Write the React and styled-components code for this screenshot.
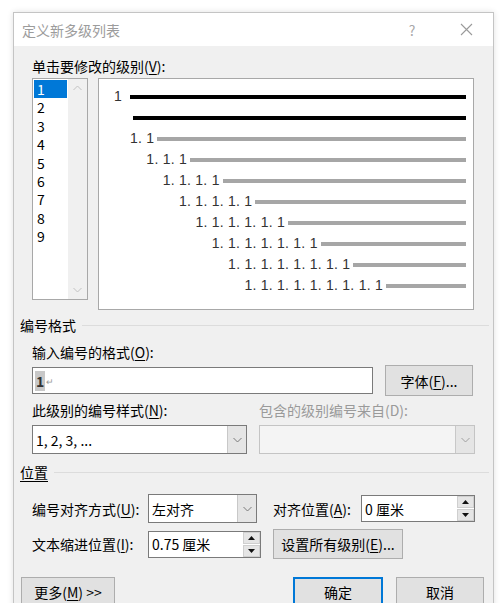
import styled, { createGlobalStyle } from 'styled-components';

const GlobalStyle = createGlobalStyle`
  body {
    margin: 0;
    background: #fff;
    font-family: "Noto Sans CJK SC", "Noto Sans", sans-serif;
    font-size: 14px;
    color: #000;
  }
`;

const Page = styled.div`
  width: 500px;
  height: 603px;
  overflow: hidden;
  padding: 12px 0 0 13px;
  box-sizing: border-box;
`;

const Dialog = styled.div`
  width: 481px;
  height: 640px;
  box-sizing: border-box;
  border: 1px solid #c4c4c4;
  background: #f0f0f0;
  box-shadow: 0 0 6px rgba(0, 0, 0, 0.12);
  display: flex;
  flex-direction: column;
`;

const TitleBar = styled.div`
  height: 33px;
  background: #fff;
  display: flex;
  align-items: center;
  padding-left: 8px;
  padding-right: 4px;

  .title {
    color: #9c9c9c;
    font-size: 14px;
    line-height: 20px;
  }
`;

const TitleButton = styled.div`
  width: 46px;
  height: 33px;
  display: flex;
  align-items: center;
  justify-content: center;
  color: #a8a8a8;
  font-size: 14px;
  margin-left: ${(p) => (p.$push ? 'auto' : '8px')};
`;

const Body = styled.div`
  padding-top: 10px;
  display: flex;
  flex-direction: column;
`;

const Section = styled.div`
  padding-left: 18px;
  margin-top: ${(p) => p.$top || 0}px;
`;

const Label = styled.div`
  line-height: 20px;
  height: 20px;
  white-space: nowrap;
  color: ${(p) => (p.$disabled ? '#9a9a9a' : '#000')};
`;

const Acc = styled.span`
  text-decoration: underline;
  text-underline-offset: 2px;
`;

const LevelRow = styled.div`
  display: flex;
  gap: 10px;
  margin-top: 2px;
`;

const ListBox = styled.div`
  width: 56px;
  height: 222px;
  box-sizing: border-box;
  border: 1px solid #a8a8a8;
  background: #fff;
  display: flex;
`;

const ListItems = styled.div`
  flex: 1;
  padding: 1px;
`;

const ListItem = styled.div`
  height: 18.4px;
  line-height: 18.4px;
  padding-left: 3px;
  font-size: 14px;
  background: ${(p) => (p.$selected ? '#0078d7' : 'transparent')};
  color: ${(p) => (p.$selected ? '#fff' : '#000')};
`;

const ScrollTrack = styled.div`
  width: 19px;
  background: #f0f0f0;
  display: flex;
  flex-direction: column;
  justify-content: space-between;
  align-items: center;
  padding: 6px 0;
`;

const Preview = styled.div`
  width: 376px;
  height: 232px;
  box-sizing: border-box;
  border: 1px solid #a8a8a8;
  background: #fff;
  padding-top: 6px;
  font-family: "Liberation Sans", Arial, sans-serif;
  font-size: 14px;
  letter-spacing: 0.25px;
  color: #333;
`;

const PreviewRow = styled.div`
  height: 21px;
  display: flex;
  align-items: center;
  padding-left: ${(p) => p.$indent}px;
  padding-right: 7px;
  white-space: nowrap;
`;

const Bar = styled.div`
  flex: 1;
  height: 4px;
  margin-left: ${(p) => p.$gap || 3}px;
  margin-top: 2px;
  background: ${(p) => (p.$dark ? '#000' : '#a6a6a6')};
`;

const GroupHeader = styled.div`
  display: flex;
  align-items: center;
  gap: 6px;
  padding-left: 6px;
  padding-right: 4px;
  margin-top: ${(p) => p.$top}px;
  line-height: 18px;
  height: 18px;

  span {
    text-decoration: ${(p) => (p.$underline ? 'underline' : 'none')};
    text-underline-offset: 3px;
  }

  &::after {
    content: '';
    flex: 1;
    height: 1px;
    background: #dcdcdc;
  }
`;

const Row = styled.div`
  display: flex;
  align-items: center;
  margin-top: ${(p) => p.$top || 0}px;
`;

const TextBox = styled.div`
  width: ${(p) => p.$w}px;
  height: ${(p) => p.$h || 27}px;
  box-sizing: border-box;
  border: 1px solid #7a7a7a;
  background: #fff;
  display: flex;
  align-items: center;
  padding-left: 2px;
  font-size: 14px;

  .sel {
    background: #c8c8c8;
    padding: 0 1px;
    font-weight: 600;
    color: #333;
  }

  .mark {
    font-size: 9px;
    color: #999;
    margin-left: 1px;
    margin-top: 2px;
  }
`;

const Button = styled.div`
  width: ${(p) => p.$w}px;
  height: ${(p) => p.$h || 30}px;
  box-sizing: border-box;
  margin-left: ${(p) => p.$left || 0}px;
  border: ${(p) => (p.$primary ? '2px solid #0078d7' : '1px solid #adadad')};
  background: #e1e1e1;
  display: flex;
  align-items: center;
  justify-content: center;
  white-space: nowrap;
`;

const Columns = styled.div`
  display: flex;
  gap: 12px;
  margin-top: 4px;
`;

const Column = styled.div`
  display: flex;
  flex-direction: column;
  gap: 5px;
`;

const Select = styled.div`
  width: ${(p) => p.$w}px;
  height: 29px;
  box-sizing: border-box;
  border: 1px solid ${(p) => (p.$disabled ? '#c4c4c4' : '#7a7a7a')};
  background: ${(p) => (p.$disabled ? '#f4f4f4' : '#fff')};
  display: flex;
  align-items: stretch;

  .value {
    flex: 1;
    display: flex;
    align-items: center;
    padding-left: 3px;
  }
`;

const DropButton = styled.div`
  width: 18px;
  background: #e5e5e5;
  border-left: 1px solid #c8c8c8;
  display: flex;
  align-items: center;
  justify-content: center;
`;

const SpinBox = styled.div`
  width: ${(p) => p.$w}px;
  height: 27px;
  box-sizing: border-box;
  border: 1px solid #7a7a7a;
  background: #fff;
  display: flex;

  .value {
    flex: 1;
    display: flex;
    align-items: center;
    padding-left: 3px;
  }
`;

const SpinButtons = styled.div`
  width: 17px;
  display: flex;
  flex-direction: column;
  gap: 1px;
  background: #fff;
`;

const SpinHalf = styled.div`
  flex: 1;
  background: #e5e5e5;
  border: 1px solid #cfcfcf;
  display: flex;
  align-items: center;
  justify-content: center;
`;

const PosGrid = styled.div`
  display: grid;
  grid-template-columns: 116px 125px 88px 114px;
  grid-auto-rows: auto;
  row-gap: 6px;
  align-items: center;
  margin-top: 13px;
`;

const Footer = styled.div`
  display: flex;
  align-items: center;
  padding-left: 7px;
  padding-right: 9px;
  margin-top: 18px;

  .spacer {
    flex: 1;
  }
`;

const Chevron = ({ up, color = '#8a8a8a' }) => (
  <svg width="9" height="6" viewBox="0 0 9 6">
    <path
      d={up ? 'M0.5 5 L4.5 1 L8.5 5' : 'M0.5 1 L4.5 5 L8.5 1'}
      fill="none"
      stroke={color}
      strokeWidth="1"
    />
  </svg>
);

const Triangle = ({ up }) => (
  <svg width="7" height="4" viewBox="0 0 7 4">
    <path d={up ? 'M0 4 L3.5 0 L7 4 Z' : 'M0 0 L3.5 4 L7 0 Z'} fill="#111" />
  </svg>
);

const Spin = ({ w, value }) => (
  <SpinBox $w={w}>
    <div className="value">{value}</div>
    <SpinButtons>
      <SpinHalf>
        <Triangle up />
      </SpinHalf>
      <SpinHalf>
        <Triangle />
      </SpinHalf>
    </SpinButtons>
  </SpinBox>
);

const Dropdown = ({ w, value, disabled }) => (
  <Select $w={w} $disabled={disabled}>
    <div className="value">{value}</div>
    <DropButton>
      <Chevron color={disabled ? '#a0a0a0' : '#7a7a7a'} />
    </DropButton>
  </Select>
);

const levels = [2, 3, 4, 5, 6, 7, 8, 9];

const App = () => {
  return (
    <Page>
      <GlobalStyle />
      <Dialog>
        <TitleBar>
          <span className="title">定义新多级列表</span>
          <TitleButton $push>?</TitleButton>
          <TitleButton>
            <svg width="13" height="13" viewBox="0 0 13 13">
              <path d="M1 1 L12 12 M12 1 L1 12" stroke="#9a9a9a" strokeWidth="1.1" />
            </svg>
          </TitleButton>
        </TitleBar>

        <Body>
          <Section>
            <Label>
              单击要修改的级别(<Acc>V</Acc>):
            </Label>
            <LevelRow>
              <ListBox>
                <ListItems>
                  {[1, 2, 3, 4, 5, 6, 7, 8, 9].map((n) => (
                    <ListItem key={n} $selected={n === 1}>
                      {n}
                    </ListItem>
                  ))}
                </ListItems>
                <ScrollTrack>
                  <Chevron up color="#c2c2c2" />
                  <Chevron color="#c2c2c2" />
                </ScrollTrack>
              </ListBox>
              <Preview>
                <PreviewRow $indent={15}>
                  1
                  <Bar $dark $gap={8} />
                </PreviewRow>
                <PreviewRow $indent={31}>
                  <Bar $dark $gap={0} />
                </PreviewRow>
                {levels.map((lv, i) => (
                  <PreviewRow key={lv} $indent={31 + i * 16.35}>
                    {Array(lv).fill('1').join('. ')}
                    <Bar />
                  </PreviewRow>
                ))}
              </Preview>
            </LevelRow>
          </Section>

          <GroupHeader $top={6}>
            <span>编号格式</span>
          </GroupHeader>

          <Section $top={8}>
            <Label>
              输入编号的格式(<Acc>O</Acc>):
            </Label>
            <Row $top={3}>
              <TextBox $w={341}>
                <span className="sel">1</span>
                <span className="mark">↵</span>
              </TextBox>
              <Button $w={88} $h={31} $left={12}>
                字体(<Acc>F</Acc>)...
              </Button>
            </Row>
            <Columns>
              <Column>
                <Label>
                  此级别的编号样式(<Acc>N</Acc>):
                </Label>
                <Dropdown w={215} value="1, 2, 3, ..." />
              </Column>
              <Column>
                <Label $disabled>包含的级别编号来自(D):</Label>
                <Dropdown w={216} disabled />
              </Column>
            </Columns>
          </Section>

          <GroupHeader $top={9} $underline>
            <span>位置</span>
          </GroupHeader>

          <Section>
            <PosGrid>
              <Label>
                编号对齐方式(<Acc>U</Acc>):
              </Label>
              <Dropdown w={109} value="左对齐" />
              <Label>
                对齐位置(<Acc>A</Acc>):
              </Label>
              <Spin w={114} value="0 厘米" />

              <Label>
                文本缩进位置(<Acc>I</Acc>):
              </Label>
              <Spin w={113} value="0.75 厘米" />
              <Button $w={130} style={{ gridColumn: 'span 2' }}>
                设置所有级别(<Acc>E</Acc>)...
              </Button>
            </PosGrid>
          </Section>

          <Footer>
            <Button $w={94}>
              更多(<Acc>M</Acc>) &gt;&gt;
            </Button>
            <div className="spacer" />
            <Button $w={90} $primary>
              确定
            </Button>
            <Button $w={88} $left={13}>
              取消
            </Button>
          </Footer>
        </Body>
      </Dialog>
    </Page>
  );
};

export default App;
